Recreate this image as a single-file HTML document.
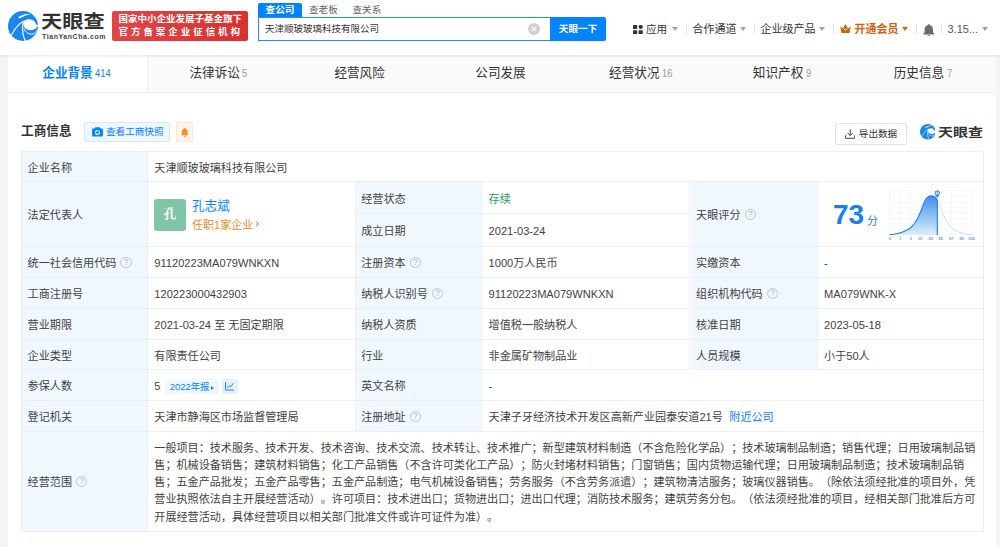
<!DOCTYPE html>
<html lang="zh-CN">
<head>
<meta charset="utf-8">
<title>天津顺玻玻璃科技有限公司 - 天眼查</title>
<style>
*{box-sizing:border-box;margin:0;padding:0}
html,body{width:1000px;height:547px;overflow:hidden}
body{text-spacing-trim:space-all;background:#f4f4f4;font-family:"Liberation Sans","Noto Sans CJK SC",sans-serif;color:#333;font-size:11px;position:relative}
.abs{position:absolute}
/* header */
#hd{position:absolute;left:0;top:0;width:1000px;height:55px;background:#fff;box-shadow:0 1px 3px rgba(0,0,0,.10);z-index:5}
#logo-ic{position:absolute;left:8px;top:11.2px;width:30px;height:30px}
#logo-t{position:absolute;left:41.3px;top:8px;font-size:18.6px;font-weight:700;color:#333;letter-spacing:0;line-height:28px;white-space:nowrap;transform:scaleX(1.14);transform-origin:0 50%}
#logo-s{position:absolute;left:42px;top:32px;font-size:7px;font-weight:700;color:#444;letter-spacing:.55px;line-height:9px;white-space:nowrap}
#badge{position:absolute;left:112px;top:11px;width:136px;height:30px;border-radius:2px;background:linear-gradient(90deg,#e24545,#d93030);color:#fff;font-weight:700;font-size:9.5px;white-space:nowrap}
#badge div{position:absolute;left:6.5px;line-height:12px}
#b1{top:1.7px}
#b2{top:14.7px;letter-spacing:2.95px}
.stab{position:absolute;top:3px;height:14px;line-height:14px;font-size:9.6px;color:#666;white-space:nowrap}
#st1{left:258px;width:44px;background:#0084ff;color:#fff;font-weight:700;text-align:center;border-radius:2px 2px 0 0}
#st2{left:309px}
#st3{left:352.5px}
#sin{position:absolute;left:258px;top:17px;width:293px;height:24px;border:1px solid #2a8be8;border-right:none;border-radius:1px 0 0 1px;background:#fff;font-size:9.5px;line-height:22px;padding-left:6px;color:#333;white-space:nowrap}
#sclr{position:absolute;left:528.5px;top:23.5px;width:11px;height:11px;border-radius:50%;background:#ccc}
#sbtn{position:absolute;left:550px;top:17px;width:56px;height:24px;background:#0084ff;color:#fff;font-size:9.6px;font-weight:700;text-align:center;line-height:24px;border-radius:0 2px 2px 0}
.nav{position:absolute;top:21px;height:16px;line-height:16px;font-size:11px;color:#333;white-space:nowrap}
.car{position:absolute;top:27px;width:0;height:0;border-left:3px solid transparent;border-right:3px solid transparent;border-top:4px solid #a2a2a2}
.sep{position:absolute;top:24px;width:1px;height:10px;background:#e6e6e6}
/* tabs */
#card{position:absolute;left:8px;top:55px;width:988px;height:500px;background:#fff}
#tabs{position:absolute;left:8px;top:55px;width:988px;height:38px;background:#fafafa;border-bottom:1px solid #efefef}
.tab{position:absolute;top:0;height:38px;line-height:36px;text-align:center;font-size:12.6px;color:#333;white-space:nowrap;width:140.85px}
.tab i{font-style:normal;font-size:10.4px;color:#999;margin-left:2.5px;display:inline-block;transform:scaleX(.9);transform-origin:0 50%}
.tab.on{background:#fff;color:#0084ff;font-weight:700;height:37px;border-right:1px solid #f0f0f0}
.tab.on i{color:#0084ff;font-weight:400}
/* section head */
#sect{position:absolute;left:21px;top:122px;font-size:12.7px;font-weight:700;color:#333;line-height:19px;white-space:nowrap}
#snap{position:absolute;left:84px;top:122px;width:85.5px;height:19.5px;border:1px solid #d6e9fc;background:#eef6fe;border-radius:2px;color:#0084ff;font-size:9.6px;line-height:18px;padding-left:21px;white-space:nowrap}
#bell{position:absolute;left:175.5px;top:122px;width:17.5px;height:19.5px;border:1px solid #fde6d2;background:#fff5ec;border-radius:2px}
#exp{position:absolute;left:834.5px;top:122.5px;width:72px;height:22px;border:1px solid #e3e3e3;background:#fff;border-radius:2px;color:#333;font-size:9.6px;line-height:20px;padding-left:23.3px;white-space:nowrap}
/* table */
.c{position:absolute;border-right:1px solid #efefef;border-bottom:1px solid #efefef;font-size:11.1px;line-height:14px;white-space:nowrap;color:#424242;display:flex;align-items:center;padding-left:6.3px;padding-top:2.2px;background:#fff}
.l{padding-left:5.6px;background:#f0f7fe;border-right-color:#e9f0f8;border-bottom-color:#e9f0f8}
.q{display:inline-block;position:relative;top:-.5px;width:11.4px;height:11.4px;border:1px solid #b9c6d6;border-radius:50%;margin-left:4.1px;font-size:8.4px;line-height:9.6px;text-align:center;color:#aab9cb;flex:none}
a{color:#0084ff;text-decoration:none}

#tb{position:absolute;left:21px;top:151px;width:962px;height:380px;border-top:1px solid #efefef;border-left:1px solid #ebeff3}
#av{font-weight:700;position:absolute;left:6.3px;top:17px;font-family:"Liberation Serif","Noto Serif CJK SC",serif;width:31.5px;height:31.5px;border-radius:3px;background:#80c6a6;color:#fff;font-size:12.6px;line-height:31.5px;text-align:center}
#nm{position:absolute;left:44px;top:14.6px;font-size:12.6px;line-height:18px;color:#0084ff}
#job{position:absolute;left:44px;top:34.5px;font-size:11.06px;line-height:16px;color:#f08a24}
#job b{display:inline-block;width:4.2px;height:4.2px;border-top:1px solid #f08a24;border-right:1px solid #f08a24;transform:rotate(45deg);margin-left:.5px;position:relative;top:2.9px;font-size:0}
#sc{position:absolute;left:15.2px;top:14.9px;font-size:28px;font-weight:700;color:#1a7ff0;line-height:36px;font-family:"Liberation Sans",sans-serif}
#fen{position:absolute;left:49.2px;top:30.6px;font-size:11px;color:#1a7ff0;line-height:16px}
#yr{display:inline-block;position:relative;top:.5px;margin-left:4.2px;height:15px;line-height:15px;padding:0 4.4px 0 5.2px;background:#f1f7fe;border-radius:2px;color:#0084ff;font-size:9.4px}
#yr i{display:inline-block;width:0;height:0;border-top:2.8px solid transparent;border-bottom:2.8px solid transparent;border-left:3.8px solid #0084ff;margin-left:1.8px;vertical-align:0.3px}
#ch{display:inline-block;position:relative;top:.5px;margin-left:3.5px;width:15.5px;height:15px;background:#e4f0fe;border-radius:2px}
#scope{align-items:flex-start;white-space:normal;padding-top:8.2px}
#scope p{line-height:17.2px;white-space:nowrap}
#wm{position:absolute;left:937.5px;top:121.6px;font-size:12.5px;font-weight:700;color:#333;line-height:22px;white-space:nowrap;transform:scaleX(1.2);transform-origin:0 50%}
</style>
</head>
<body>
<div id="card"></div>
<div id="hd">
  <svg id="logo-ic" viewBox="0 0 30 30"><defs><g id="tyc"><circle cx="15" cy="15" r="15" fill="#1a86f0"/><path d="M15.6 10.2C17.6 8.5 21 7.9 23.4 8.6C25.6 9.3 27.2 11.2 28.3 13.5L30.2 14.3C29.4 16.8 27 18.7 24 19.1C21 19.4 18.2 18.4 16.6 16.4C15.3 14.7 15 12.4 15.6 10.2Z" fill="#fff"/><path d="M10.2 6C14 3.6 18.6 2.4 23.2 2.7C18.8 3.9 14.8 5.5 11.2 7.6Z" fill="#fff"/><path d="M16 10C11 12.6 6.4 18 3.2 24.6" stroke="#fff" stroke-width="1.15" fill="none"/><path d="M15.2 11.5C13.8 18 14.8 24.5 17.2 30" stroke="#fff" stroke-width="1.15" fill="none"/><path d="M15.8 17.4C17.6 21.6 21.4 23.8 25 23C26.8 22.4 28.2 21 29 19.2" stroke="#fff" stroke-width="1" fill="none"/></g></defs><use href="#tyc"/></svg>
  <div id="logo-t">天眼查</div>
  <div id="logo-s">TianYanCha.com</div>
  <div id="badge"><div id="b1">国家中小企业发展子基金旗下</div><div id="b2">官方备案企业征信机构</div></div>
  <div class="stab" id="st1">查公司</div><div class="stab" id="st2">查老板</div><div class="stab" id="st3">查关系</div>
  <div id="sin">天津顺玻玻璃科技有限公司</div>
    <div id="sbtn">天眼一下</div>

  <svg class="abs" style="left:528.2px;top:23.2px" width="12" height="12" viewBox="0 0 12 12"><circle cx="6" cy="6" r="6" fill="#cfcfcf"/><path d="M3.8 3.8L8.2 8.2M8.2 3.8L3.8 8.2" stroke="#fff" stroke-width="1.2"/></svg>
  <svg class="abs" style="left:632.5px;top:24.8px" width="10" height="9.2" viewBox="0 0 10 9.2"><rect x="0" y="0" width="4.2" height="4" rx=".7" fill="#333"/><circle cx="7.7" cy="2" r="2.1" fill="#333"/><rect x="0" y="5.2" width="4.2" height="4" rx=".7" fill="#333"/><rect x="5.6" y="5.2" width="4.2" height="4" rx=".7" fill="#333"/></svg>
  <div class="nav" style="left:646px;font-size:10.6px">应用</div><div class="car" style="left:672.3px"></div>
  <div class="sep" style="left:685.5px"></div>
  <div class="nav" style="left:692.5px">合作通道</div><div class="car" style="left:740.3px"></div>
  <div class="sep" style="left:754px"></div>
  <div class="nav" style="left:760.5px">企业级产品</div><div class="car" style="left:819.3px"></div>
  <div class="sep" style="left:832.5px"></div>
  <svg class="abs" style="left:840.2px;top:23.8px" width="11" height="9.2" viewBox="0 0 11 9.2"><path d="M0.3 2.5L3 4.4L5.5 0.1L8 4.4L10.7 2.5L9.7 8.2Q9.6 9.1 8.7 9.1H2.3Q1.4 9.1 1.3 8.2Z" fill="#d4620c"/><path d="M3.8 4.6L5.5 6.5L7.2 4.6" stroke="#fff" stroke-width="1" fill="none"/></svg>
  <div class="nav" style="left:854.5px;color:#d4620c;font-weight:700">开通会员</div><div class="car" style="left:902px;border-top-color:#e0640c"></div>
  <div class="sep" style="left:915.5px"></div>
  <svg class="abs" style="left:923px;top:23.6px" width="11.6" height="12.6" viewBox="0 0 11.6 12.6"><path d="M5.8 0.2C6.5 0.2 6.9 0.7 6.9 1.3C8.9 1.8 10 3.5 10 5.6V8.2L11.4 10V10.5H0.2V10L1.6 8.2V5.6C1.6 3.5 2.7 1.8 4.7 1.3C4.7 0.7 5.1 0.2 5.8 0.2Z" fill="#6a6a6a"/><path d="M4.3 11.3H7.3C7.3 12.1 6.6 12.5 5.8 12.5C5 12.5 4.3 12.1 4.3 11.3Z" fill="#6a6a6a"/></svg>
  <div class="sep" style="left:940.5px"></div>
  <div class="nav" style="left:947.5px;color:#555">3.15...</div><div class="car" style="left:982px"></div>
</div>
<div id="tabs">
  <div class="tab on" style="left:-0.50px">企业背景<i>414</i></div>
  <div class="tab" style="left:140.35px">法律诉讼<i>5</i></div>
  <div class="tab" style="left:281.20px">经营风险</div>
  <div class="tab" style="left:422.05px">公司发展</div>
  <div class="tab" style="left:562.90px">经营状况<i>16</i></div>
  <div class="tab" style="left:703.75px">知识产权<i>9</i></div>
  <div class="tab" style="left:844.60px">历史信息<i>7</i></div>
</div>
<div id="sect">工商信息</div>
<div id="snap"><svg class="abs" style="left:6.5px;top:4px" width="11" height="9.6" viewBox="0 0 11 9.6"><path d="M3.4 0.2H7.6L8.4 1.6H10A0.9 0.9 0 0 1 10.9 2.5V8.6A0.9 0.9 0 0 1 10 9.5H1A0.9 0.9 0 0 1 0.1 8.6V2.5A0.9 0.9 0 0 1 1 1.6H2.6Z" fill="#0084ff"/><circle cx="5.5" cy="5.4" r="2.5" fill="#fff"/><circle cx="5.5" cy="5.4" r="1.4" fill="#0084ff"/></svg>查看工商快照</div>
<div id="bell"><svg class="abs" style="left:4.3px;top:4.6px" width="7.6" height="9" viewBox="0 0 7.6 9"><path d="M3.8 0C4.3 0 4.6 0.4 4.6 0.8C5.9 1.2 6.6 2.3 6.6 3.7V5.6L7.5 6.8V7.2H0.1V6.8L1 5.6V3.7C1 2.3 1.7 1.2 3 0.8C3 0.4 3.3 0 3.8 0Z" fill="#ff8a1f"/><path d="M2.8 7.8H4.8C4.8 8.5 4.4 8.9 3.8 8.9C3.2 8.9 2.8 8.5 2.8 7.8Z" fill="#ff8a1f"/></svg></div>
<div id="exp"><svg class="abs" style="left:9.3px;top:5px" width="10.4" height="10" viewBox="0 0 10.4 10"><path d="M5.2 0.3V6.4M2.6 4L5.2 6.6L7.8 4M0.6 6.2V9.3H9.8V6.2" stroke="#444" stroke-width="1" fill="none"/></svg>导出数据</div>
<svg class="abs" style="left:919.8px;top:124.2px" width="15.6" height="15.6" viewBox="0 0 30 30"><use href="#tyc"/></svg>
<div id="wm">天眼查</div>

<div id="tb">
  <div class="c l" style="left:0px;top:0px;width:126px;height:30.1px">企业名称</div>
  <div class="c" style="left:126px;top:0px;width:835.6px;height:30.1px">天津顺玻玻璃科技有限公司</div>

  <div class="c l" style="left:0px;top:30.1px;width:126px;height:64.9px">法定代表人</div>
  <div class="c" style="left:126px;top:30.1px;width:207.6px;height:64.9px">
    <div id="av">孔</div>
    <a id="nm">孔志斌</a>
    <span id="job">任职1家企业<b>›</b></span>
  </div>
  <div class="c l" style="left:333.6px;top:30.1px;width:126.7px;height:32.3px">经营状态</div>
  <div class="c" style="left:460.3px;top:30.1px;width:208.2px;height:32.3px;color:#1c9c5c">存续</div>
  <div class="c l" style="left:333.6px;top:62.4px;width:126.7px;height:32.6px">成立日期</div>
  <div class="c" style="left:460.3px;top:62.4px;width:208.2px;height:32.6px">2021-03-24</div>
  <div class="c l" style="left:668.5px;top:30.1px;width:127.3px;height:64.9px">天眼评分<span class="q">?</span></div>
  <div class="c" style="left:795.8px;top:30.1px;width:165.8px;height:64.9px">
    <span id="sc">73</span><span id="fen">分</span>
    <svg class="abs" style="left:63.4px;top:2.7px" width="102.4" height="61" viewBox="0 0 104 62" preserveAspectRatio="none"><defs><linearGradient id="cg" x1="0" y1="0" x2="0" y2="1"><stop offset="0" stop-color="#3d8fea"/><stop offset="1" stop-color="#dcecfd"/></linearGradient></defs><path d="M8.84 5.66V50.70M19.32 5.66V50.70M29.80 5.66V50.70M40.29 5.66V50.70M50.77 5.66V50.70M61.25 5.66V50.70M71.73 5.66V50.70M82.22 5.66V50.70M92.70 5.66V50.70M8.84 5.66H92.70M8.84 11.29H92.70M8.84 16.92H92.70M8.84 22.55H92.70M8.84 28.18H92.70M8.84 33.81H92.70M8.84 39.44H92.70M8.84 45.07H92.70M8.84 50.70H92.70" stroke="#e9f1fb" stroke-width=".55" fill="none"/><path d="M8.8 50.6C10.0 50.5 13.6 50.1 15.9 49.6C18.2 49.1 20.7 48.4 22.7 47.6C24.6 46.8 26.2 46.0 27.8 45.0C29.3 44.0 30.5 43.0 31.7 41.7C32.9 40.4 34.1 39.0 35.1 37.4C36.2 35.8 37.1 34.0 38.0 32.3C38.8 30.6 39.5 28.9 40.2 27.2C40.9 25.5 41.5 23.8 42.1 22.1C42.8 20.4 43.5 18.4 44.2 17.0C44.9 15.5 45.4 14.4 46.4 13.4C47.5 12.4 49.2 11.3 50.4 11.0C51.6 10.7 52.9 11.3 53.8 11.7C54.7 12.0 55.2 12.5 55.7 13.1C56.3 13.7 57.0 14.9 57.2 15.3V50.7H8.8Z" fill="url(#cg)"/><path d="M57.2 15.3C57.5 16.0 58.2 17.7 58.9 19.3C59.6 20.9 60.4 23.1 61.2 24.9C61.9 26.8 62.7 28.7 63.4 30.4C64.2 32.1 64.8 33.4 65.7 35.1C66.7 36.8 68.0 39.0 69.1 40.6C70.2 42.1 71.2 43.1 72.5 44.2C73.8 45.3 75.5 46.3 77.0 47.0C78.5 47.8 79.9 48.2 81.6 48.7C83.3 49.2 85.4 49.6 87.2 50.0C89.1 50.3 91.8 50.5 92.7 50.6" stroke="#cfd3d8" stroke-width=".8" fill="none"/><path d="M8.8 50.6C10.0 50.5 13.6 50.1 15.9 49.6C18.2 49.1 20.7 48.4 22.7 47.6C24.6 46.8 26.2 46.0 27.8 45.0C29.3 44.0 30.5 43.0 31.7 41.7C32.9 40.4 34.1 39.0 35.1 37.4C36.2 35.8 37.1 34.0 38.0 32.3C38.8 30.6 39.5 28.9 40.2 27.2C40.9 25.5 41.5 23.8 42.1 22.1C42.8 20.4 43.5 18.4 44.2 17.0C44.9 15.5 45.4 14.4 46.4 13.4C47.5 12.4 49.2 11.3 50.4 11.0C51.6 10.7 52.9 11.3 53.8 11.7C54.7 12.0 55.2 12.5 55.7 13.1C56.3 13.7 57.0 14.9 57.2 15.3" stroke="#1a7fe8" stroke-width="1.1" fill="none"/><path d="M57.2 15.3V50.7" stroke="#1a7fe8" stroke-width="1.1"/><path d="M57.2 5.6A2.6 2.6 0 0 1 59.8 8.2C59.8 10 57.2 13 57.2 13C57.2 13 54.6 10 54.6 8.2A2.6 2.6 0 0 1 57.2 5.6Z" fill="#1a7fe8"/><circle cx="57.2" cy="8.2" r="1.7" fill="#fff"/><circle cx="57.2" cy="8.2" r=".8" fill="#1a7fe8"/><g font-family="Liberation Sans,sans-serif" font-size="4.2" font-weight="700" fill="#5aa0ec" text-anchor="middle"><text x="9.1" y="56.2">0</text><text x="19.5" y="56.2">1</text><text x="30.0" y="56.2">3</text><text x="39.7" y="56.2">15</text><text x="50.6" y="56.2">50</text><text x="60.8" y="56.2">85</text><text x="71.4" y="56.2">97</text><text x="81.8" y="56.2">99</text><text x="91.8" y="56.2">100</text></g></svg>
  </div>

  <div class="c l" style="left:0px;top:95px;width:126px;height:31.2px">统一社会信用代码<span class="q">?</span></div>
  <div class="c" style="left:126px;top:95px;width:207.6px;height:31.2px">91120223MA079WNKXN</div>
  <div class="c l" style="left:333.6px;top:95px;width:126.7px;height:31.2px">注册资本<span class="q">?</span></div>
  <div class="c" style="left:460.3px;top:95px;width:208.2px;height:31.2px">1000万人民币</div>
  <div class="c l" style="left:668.5px;top:95px;width:127.3px;height:31.2px">实缴资本</div>
  <div class="c" style="left:795.8px;top:95px;width:165.8px;height:31.2px">-</div>

  <div class="c l" style="left:0px;top:126.2px;width:126px;height:30.7px">工商注册号</div>
  <div class="c" style="left:126px;top:126.2px;width:207.6px;height:30.7px">120223000432903</div>
  <div class="c l" style="left:333.6px;top:126.2px;width:126.7px;height:30.7px">纳税人识别号<span class="q">?</span></div>
  <div class="c" style="left:460.3px;top:126.2px;width:208.2px;height:30.7px">91120223MA079WNKXN</div>
  <div class="c l" style="left:668.5px;top:126.2px;width:127.3px;height:30.7px">组织机构代码<span class="q">?</span></div>
  <div class="c" style="left:795.8px;top:126.2px;width:165.8px;height:30.7px">MA079WNK-X</div>

  <div class="c l" style="left:0px;top:156.9px;width:126px;height:30.7px">营业期限</div>
  <div class="c" style="left:126px;top:156.9px;width:207.6px;height:30.7px">2021-03-24 至 无固定期限</div>
  <div class="c l" style="left:333.6px;top:156.9px;width:126.7px;height:30.7px">纳税人资质</div>
  <div class="c" style="left:460.3px;top:156.9px;width:208.2px;height:30.7px">增值税一般纳税人</div>
  <div class="c l" style="left:668.5px;top:156.9px;width:127.3px;height:30.7px">核准日期</div>
  <div class="c" style="left:795.8px;top:156.9px;width:165.8px;height:30.7px">2023-05-18</div>

  <div class="c l" style="left:0px;top:187.6px;width:126px;height:30.7px">企业类型</div>
  <div class="c" style="left:126px;top:187.6px;width:207.6px;height:30.7px">有限责任公司</div>
  <div class="c l" style="left:333.6px;top:187.6px;width:126.7px;height:30.7px">行业</div>
  <div class="c" style="left:460.3px;top:187.6px;width:208.2px;height:30.7px">非金属矿物制品业</div>
  <div class="c l" style="left:668.5px;top:187.6px;width:127.3px;height:30.7px">人员规模</div>
  <div class="c" style="left:795.8px;top:187.6px;width:165.8px;height:30.7px">小于50人</div>

  <div class="c l" style="left:0px;top:218.3px;width:126px;height:30.7px">参保人数</div>
  <div class="c" style="left:126px;top:218.3px;width:207.6px;height:30.7px">5<span id="yr">2022年报<i></i></span><span id="ch"><svg class="abs" style="left:3.2px;top:3.2px" width="9" height="8.6" viewBox="0 0 9 8.6"><path d="M0.5 0V8.1H9" stroke="#2a86ee" stroke-width="1" fill="none"/><path d="M2.3 5.8L4.2 3.6L5.6 4.9L8.4 1.2" stroke="#2a86ee" stroke-width="1" fill="none"/></svg></span></div>
  <div class="c l" style="left:333.6px;top:218.3px;width:126.7px;height:30.7px">英文名称</div>
  <div class="c" style="left:460.3px;top:218.3px;width:501.3px;height:30.7px">-</div>

  <div class="c l" style="left:0px;top:249px;width:126px;height:30.7px">登记机关</div>
  <div class="c" style="left:126px;top:249px;width:207.6px;height:30.7px">天津市静海区市场监督管理局</div>
  <div class="c l" style="left:333.6px;top:249px;width:126.7px;height:30.7px">注册地址<span class="q">?</span></div>
  <div class="c" style="left:460.3px;top:249px;width:501.3px;height:30.7px">天津子牙经济技术开发区高新产业园泰安道21号<a style="margin-left:6.5px">附近公司</a></div>

  <div class="c l" style="left:0px;top:279.7px;width:126px;height:99.9px">经营范围<span class="q">?</span></div>
  <div class="c" id="scope" style="left:126px;top:279.7px;width:835.6px;height:99.9px"><p>一般项目：技术服务、技术开发、技术咨询、技术交流、技术转让、技术推广；新型建筑材料制造（不含危险化学品）；技术玻璃制品制造；销售代理；日用玻璃制品销<br>售；机械设备销售；建筑材料销售；化工产品销售（不含许可类化工产品）；防火封堵材料销售；门窗销售；国内货物运输代理；日用玻璃制品制造；技术玻璃制品销<br>售；五金产品批发；五金产品零售；五金产品制造；电气机械设备销售；劳务服务（不含劳务派遣）；建筑物清洁服务；玻璃仪器销售。（除依法须经批准的项目外，凭<br>营业执照依法自主开展经营活动）。许可项目：技术进出口；货物进出口；进出口代理；消防技术服务；建筑劳务分包。（依法须经批准的项目，经相关部门批准后方可<br>开展经营活动，具体经营项目以相关部门批准文件或许可证件为准）。</p></div>
</div>
</body>
</html>
